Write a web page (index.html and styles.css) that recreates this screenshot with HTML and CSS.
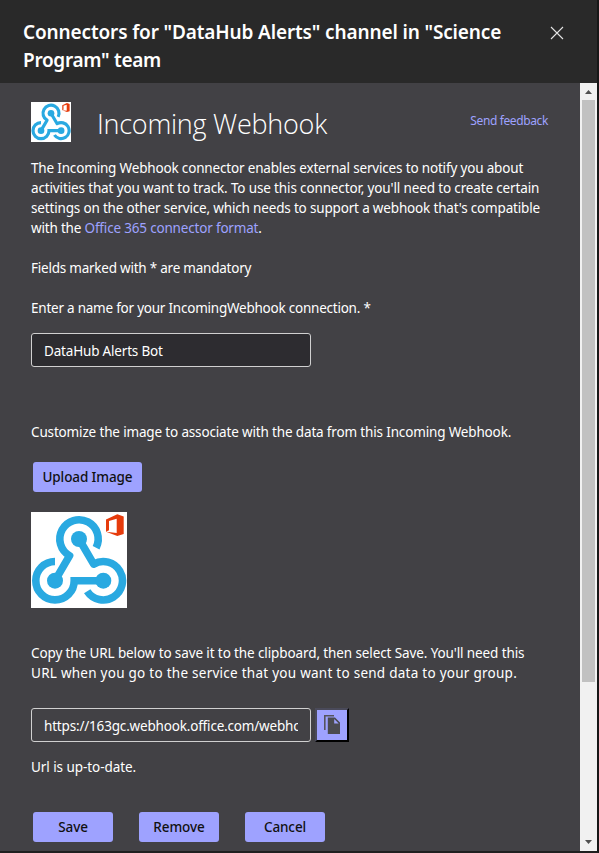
FILE: index.html
```
<!DOCTYPE html>
<html lang="en">
<head>
<meta charset="utf-8">
<title>Connectors</title>
<link rel="stylesheet" href="styles.css">
</head>
<body>
<svg width="0" height="0" class="defs">
  <symbol id="webhook" viewBox="0 0 96 96">
    <rect width="96" height="96" fill="#fff"/>
    <g fill="none" stroke="#29a9e1" stroke-width="7.6" stroke-linejoin="round">
      <path d="M65.1 35.7A19.2 19.2 0 1 0 38.6 43.7L24 68.7"/>
      <path d="M48 27L62.7 52.1A19.2 19.2 0 1 1 56.2 79.2"/>
      <path d="M24 49.5A19.2 19.2 0 1 0 43.2 68.7M39.4 68.7H72.3"/>
    </g>
    <g fill="#29a9e1"><circle cx="48" cy="27" r="8"/><circle cx="24" cy="68.7" r="8"/><circle cx="72.3" cy="68.7" r="8"/></g>
    <path fill="#e63b0c" fill-rule="evenodd" d="M75 7.5L86.3 2.3L92.7 4.5V22L86.3 24L75 19.7ZM78 9V18.3L75 19.7L85.7 21V6.8Z"/>
  </symbol>
</svg>
<div class="dialog">
  <header class="header">
    <h1><span class="t1">Connectors for "DataHub Alerts" channel in "Science</span><br><span class="t2">Program" team</span></h1>
    <svg class="close" width="14" height="14" viewBox="0 0 14 14"><path d="M1 1L13 13M13 1L1 13" stroke="#e4e4e4" stroke-width="1.1"/></svg>
  </header>
  <div class="body">
    <main class="content">
      <div class="title">
        <svg width="40" height="40"><use href="#webhook"/></svg>
        <h2>Incoming Webhook</h2>
        <a class="feedback">Send feedback</a>
      </div>
      <p class="intro"><span class="a1">The Incoming Webhook connector enables external services to notify you about</span><br><span class="a2">activities that you want to track. To use this connector, you'll need to create certain</span><br><span class="a3">settings on the other service, which needs to support a webhook that's compatible</span><br><span class="a4">with the <a>Office 365 connector format</a>.</span></p>
      <p class="b1">Fields marked with * are mandatory</p>
      <p class="b2">Enter a name for your IncomingWebhook connection. *</p>
      <div class="field name"><span>DataHub Alerts Bot</span></div>
      <p class="b3">Customize the image to associate with the data from this Incoming Webhook.</p>
      <div class="btn upload"><span>Upload Image</span></div>
      <svg class="preview" width="96" height="96"><use href="#webhook"/></svg>
      <p class="copytext"><span class="c1">Copy the URL below to save it to the clipboard, then select Save. You'll need this</span><br><span class="c2">URL when you go to the service that you want to send data to your group.</span></p>
      <div class="urlrow">
        <div class="field"><span class="url">https://163gc.webhook.office.com/webho</span></div>
        <div class="copy"><svg width="16" height="19" viewBox="0 0 16 19"><path d="M0 0H10V1.6H1.6V15H0Z" fill="#55545c"/><path d="M3.8 2.6H11L16 7.6V19H3.8ZM10.2 4V8.4H14.7Z" fill="#4b4b50" fill-rule="evenodd"/></svg></div>
      </div>
      <p class="status">Url is up-to-date.</p>
      <div class="actions"><div class="btn">Save</div><div class="btn">Remove</div><div class="btn">Cancel</div></div>
    </main>
    <div class="scroll">
      <svg width="17" height="17"><path d="M5 11H12L8.5 7Z" fill="#505050"/></svg>
      <div class="thumb"></div>
      <svg width="17" height="17"><path d="M5 6H12L8.5 10Z" fill="#505050"/></svg>
    </div>
  </div>
</div>
</body>
</html>
```
FILE: styles.css
```
* { box-sizing: border-box; }
body { margin: 0; background: #292929; color: #fff; font: 13.5px/20px "Noto Sans", "Open Sans", sans-serif; white-space: nowrap; overflow: hidden; }
svg { display: block; flex: none; }
h1, h2, p { margin: 0; }
a { color: #9ea2ff; }
.defs { position: absolute; }
.dialog { width: 599px; height: 853px; border-right: 2px solid #171717; border-bottom: 2px solid #202020; }
.header { height: 83px; padding: 18px 33px 0 23px; display: flex; justify-content: space-between; }
h1 { font-size: 19px; line-height: 28px; font-weight: 600; }
.t1 { letter-spacing: -0.14px; }
.t2 { letter-spacing: -0.3px; }
.close { margin-top: 8px; }
.body { display: flex; height: 768px; background: #424145; }
.content { width: 580px; padding: 19px 32px 0 31px; overflow: hidden; }
.title { display: flex; height: 40px; }
h2 { margin: 2px 0 0 26px; font-size: 27px; line-height: 40px; font-weight: 300; letter-spacing: -0.25px; font-family: "Open Sans", "Noto Sans", sans-serif; }
.feedback { margin-left: auto; margin-top: 9px; font-size: 12px; letter-spacing: -0.38px; }
.intro { margin-top: 16px; height: 80px; }
.a1, .a3 { letter-spacing: -0.17px; }
.a2 { letter-spacing: -0.14px; }
.a4 { letter-spacing: -0.18px; }
.b1, .b2 { margin-top: 20px; letter-spacing: -0.23px; }
.field { width: 280px; height: 34px; border: 1px solid #d0d0d0; border-radius: 3px; padding: 7px 12px; letter-spacing: -0.18px; }
.field span { display: block; overflow: hidden; line-height: 20px; }
.name { margin-top: 15px; background: #2d2c30; }
.b3 { margin-top: 55px; letter-spacing: -0.155px; }
.btn { width: 80px; height: 30px; border-radius: 3px; background: #9ea2ff; color: #111; text-align: center; line-height: 30px; font-weight: 500; letter-spacing: -0.1px; }
.upload { width: 109px; margin: 20px 0 0 2px; }
.preview { margin-top: 20px; }
.copytext { margin-top: 35px; height: 40px; }
.c1 { letter-spacing: -0.11px; }
.c2 { letter-spacing: 0.26px; }
.urlrow { display: flex; gap: 4px; margin-top: 25px; }
.copy { width: 34px; height: 34px; border: 2px solid; border-color: #4a4a5a #000 #000 #4a4a5a; background: #9ea2ff; padding: 5px 0 0 7px; }
.status { margin-top: 15px; letter-spacing: -0.06px; }
.actions { display: flex; gap: 26px; margin: 35px 0 0 2px; }
.scroll { width: 17px; background: #f1f1f1; display: flex; flex-direction: column; }
.thumb { height: 582px; margin: 0 2px auto; background: #c1c1c1; }
```
